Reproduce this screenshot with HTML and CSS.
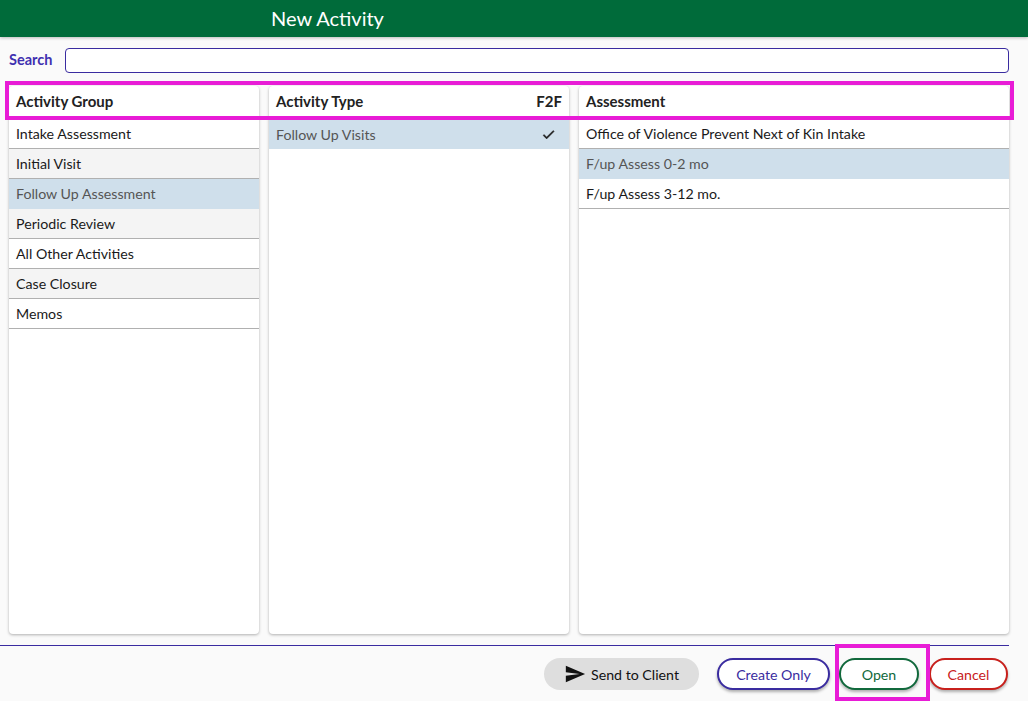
FILE: index.html
```html
<!DOCTYPE html>
<html>
<head>
<meta charset="utf-8">
<link rel="stylesheet" href="styles.css">
</head>
<body>
<div class="app">
  <header class="titlebar">New Activity</header>
  <div class="search-row">
    <label class="search-label">Search</label>
    <input class="search-input" type="text">
  </div>
  <div class="columns">
    <section class="panel">
      <div class="panel-head"><span>Activity Group</span></div>
      <div class="row">Intake Assessment</div>
      <div class="row alt">Initial Visit</div>
      <div class="row sel">Follow Up Assessment</div>
      <div class="row alt">Periodic Review</div>
      <div class="row">All Other Activities</div>
      <div class="row alt">Case Closure</div>
      <div class="row">Memos</div>
    </section>
    <section class="panel">
      <div class="panel-head"><span>Activity Type</span><span>F2F</span></div>
      <div class="row sel flat"><span>Follow Up Visits</span>
        <svg class="check" width="15" height="15" viewBox="0 0 24 24"><path d="M9 16.17L4.83 12l-1.42 1.41L9 19 21 7l-1.41-1.41z" fill="#222" stroke="#222" stroke-width="0.8"/></svg>
      </div>
    </section>
    <section class="panel">
      <div class="panel-head"><span>Assessment</span></div>
      <div class="row">Office of Violence Prevent Next of Kin Intake</div>
      <div class="row sel">F/up Assess 0-2 mo</div>
      <div class="row">F/up Assess 3-12 mo.</div>
    </section>
  </div>
  <footer class="footer">
    <button class="btn btn-send">
      <svg width="22" height="22" viewBox="0 0 24 24"><path d="M2.01 21L23 12 2.01 3 2 10l15 2-15 2z" fill="#111"/></svg>
      <span>Send to Client</span>
    </button>
    <button class="btn btn-create">Create Only</button>
    <button class="btn btn-open">Open</button>
    <button class="btn btn-cancel">Cancel</button>
  </footer>
  <div class="hl hl-head"></div>
  <div class="hl hl-open"></div>
</div>
</body>
</html>
```
FILE: styles.css
```css
* { box-sizing: border-box; }
html, body { margin: 0; padding: 0; }
body {
  background: #fafafa;
  font-family: "Lato", "Noto Sans", sans-serif;
  color: #222;
  width: 1028px;
  height: 701px;
  overflow: hidden;
}
.app { position: relative; height: 701px; }
.titlebar {
  height: 37px;
  background: #006b3a;
  color: #fff;
  font-size: 20px;
  line-height: 36px;
  padding-left: 271px;
  box-shadow: 0 1px 3px rgba(0,0,0,0.25);
}
.search-row {
  display: flex;
  align-items: center;
  padding: 11px 19px 0 9px;
  gap: 10px;
}
.search-label {
  color: #3f30b0;
  font-weight: 700;
  font-size: 14.5px;
  width: 46px;
  padding-bottom: 2px;
}
.search-input {
  flex: 1;
  height: 25px;
  border: 1px solid #3a2ca0;
  border-radius: 4px;
  background: #fff;
  outline: none;
}
.columns {
  display: grid;
  grid-template-columns: 250px 300px 430px;
  gap: 10px;
  padding: 0 9px;
  margin-top: 13px;
  height: 548px;
}
.panel {
  background: #fff;
  border-radius: 4px;
  box-shadow: 0 1px 3px rgba(0,0,0,0.3);
  overflow: hidden;
}
.panel-head {
  height: 33px;
  display: flex;
  align-items: center;
  justify-content: space-between;
  padding: 0 7px 4px;
  font-weight: 700;
  font-size: 15px;
  color: #222;
}
.row {
  height: 30px;
  display: flex;
  align-items: center;
  justify-content: space-between;
  padding: 0 7px;
  font-size: 14.2px;
  color: #1a1a1a;
  border-bottom: 1px solid #b0b0b0;
}
.row.alt { background: #f4f4f4; }
.row.sel { background: #cfdfeb; color: #555; border-bottom-color: #cfdfeb; }
.row.flat { border-bottom: 0; }
.check { margin-right: 6px; }
.footer {
  margin-top: 11px;
  margin-right: 19px;
  border-top: 1px solid #3a2ca0;
  display: flex;
  justify-content: flex-end;
  align-items: center;
  padding-top: 12px;
  padding-right: 1px;
}
.btn {
  height: 32px;
  border-radius: 16px;
  font-family: inherit;
  font-size: 14.2px;
  background: #fff;
  display: flex;
  align-items: center;
  justify-content: center;
  cursor: pointer;
}
.btn-send {
  width: 155px;
  background: #dedede;
  border: 0;
  color: #111;
  gap: 5px;
  margin-right: 18px;
}
.btn-create {
  width: 113px;
  border: 2px solid #3a2ca0;
  color: #3a2ca0;
  box-shadow: 0 2px 3px rgba(0,0,0,0.3);
  margin-right: 9px;
}
.btn-open {
  width: 80px;
  border: 2px solid #11693c;
  color: #11693c;
  box-shadow: 0 2px 3px rgba(0,0,0,0.3);
  margin-right: 10px;
}
.btn-cancel {
  width: 79px;
  border: 2px solid #c8201c;
  color: #c8201c;
  box-shadow: 0 2px 3px rgba(0,0,0,0.3);
}
.hl {
  position: absolute;
  border: 4px solid #e81cd6;
  pointer-events: none;
}
.hl-head { left: 5px; top: 81px; width: 1009px; height: 39px; }
.hl-open { left: 835px; top: 644px; width: 95px; height: 57px; }
```
